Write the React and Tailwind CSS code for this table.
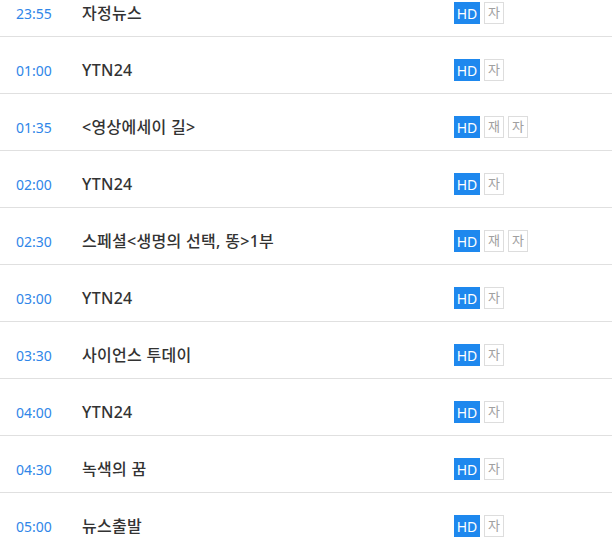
import React from "react";

const rows = [
  { t: "23:55", title: "자정뉴스", re: false },
  { t: "01:00", title: "YTN24", re: false },
  { t: "01:35", title: "<영상에세이 길>", re: true },
  { t: "02:00", title: "YTN24", re: false },
  { t: "02:30", title: "스페셜<생명의 선택, 똥>1부", re: true },
  { t: "03:00", title: "YTN24", re: false },
  { t: "03:30", title: "사이언스 투데이", re: false },
  { t: "04:00", title: "YTN24", re: false },
  { t: "04:30", title: "녹색의 꿈", re: false },
  { t: "05:00", title: "뉴스출발", re: false },
];

function Box({ children }) {
  return (
    <span className="flex h-[22px] w-[20px] items-center justify-center border border-[#dddddd] text-[13px] text-[#a0a0a0]">
      {children}
    </span>
  );
}

export default function App() {
  return (
    <div
      className="h-[545px] w-[612px] overflow-hidden bg-white"
      style={{ fontFamily: '"Noto Sans", "Noto Sans CJK KR", sans-serif' }}
    >
      <div className="-mt-[20px]">
        {rows.map((r, i) => (
          <div
            key={i}
            className="flex h-[57px] items-start border-b border-[#e0e0e0] pt-[22px]"
          >
            <div className="flex h-[22px] w-[82px] items-center pl-[16px] text-[14px] text-[#2f86e8]">
              {r.t}
            </div>
            <div className="flex h-[22px] flex-1 items-center text-[16px] font-medium tracking-[0.3px] text-[#333333]">
              {r.title}
            </div>
            <div className="flex w-[158px] gap-[4px]">
              <span className="flex h-[22px] w-[26px] items-center justify-center bg-[#1e88ee] text-[14px] text-white">
                HD
              </span>
              {r.re && <Box>재</Box>}
              <Box>자</Box>
            </div>
          </div>
        ))}
      </div>
    </div>
  );
}
